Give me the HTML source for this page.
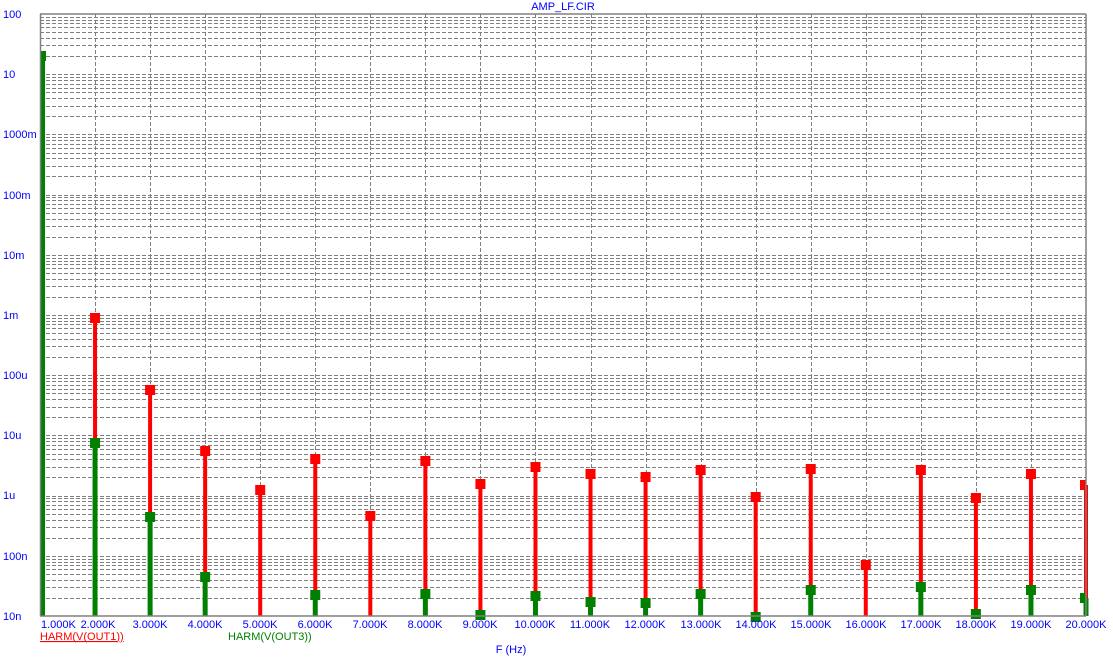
<!DOCTYPE html>
<html><head><meta charset="utf-8"><style>
html,body{margin:0;padding:0;background:#fff;width:1113px;height:661px;overflow:hidden}
svg{display:block}
text{font-family:"Liberation Sans",sans-serif;font-size:11px}
</style></head><body>
<svg id="s" width="1113" height="661" xmlns="http://www.w3.org/2000/svg">
<g id="grid"></g>
<g id="bars"></g>
<line x1="40" y1="14" x2="1086" y2="14" stroke="#808080" stroke-width="1.5"/>
<line x1="40" y1="616" x2="1086" y2="616" stroke="#808080" stroke-width="1.5"/>
<line x1="1086" y1="14" x2="1086" y2="616" stroke="#808080" stroke-width="1.5"/>
<line x1="40.5" y1="14" x2="40.5" y2="616" stroke="#808080" stroke-width="1.5"/>
<text x="563" y="10" fill="#0000ff" text-anchor="middle">AMP_LF.CIR</text>
<g fill="#0000ff">
<text x="3" y="18">100</text><text x="3" y="78">10</text><text x="3" y="138">1000m</text>
<text x="3" y="199">100m</text><text x="3" y="259">10m</text><text x="3" y="319">1m</text>
<text x="3" y="379">100u</text><text x="3" y="439">10u</text><text x="3" y="499">1u</text>
<text x="3" y="560">100n</text><text x="3" y="620">10n</text>
</g>
<g fill="#0000ff" text-anchor="middle">
<text x="41" y="628" text-anchor="start">1.000K</text>
<text x="98" y="628">2.000K</text><text x="150" y="628">3.000K</text><text x="205" y="628">4.000K</text>
<text x="260" y="628">5.000K</text><text x="315" y="628">6.000K</text><text x="370" y="628">7.000K</text>
<text x="425" y="628">8.000K</text><text x="480" y="628">9.000K</text><text x="535" y="628">10.000K</text>
<text x="590" y="628">11.000K</text><text x="645" y="628">12.000K</text><text x="701" y="628">13.000K</text>
<text x="756" y="628">14.000K</text><text x="811" y="628">15.000K</text><text x="866" y="628">16.000K</text>
<text x="921" y="628">17.000K</text><text x="976" y="628">18.000K</text><text x="1031" y="628">19.000K</text>
<text x="1086" y="628">20.000K</text>
</g>
<text x="40" y="640" fill="#ff0000" text-decoration="underline">HARM(V(OUT1))</text>
<line x1="40" y1="641.5" x2="117" y2="641.5" stroke="#ff0000"/>
<text x="228" y="640" fill="#008000">HARM(V(OUT3))</text>
<text x="511" y="653" fill="#0000ff" text-anchor="middle">F (Hz)</text>
</svg>
<script>
var NS="http://www.w3.org/2000/svg",g=document.getElementById('grid'),b=document.getElementById('bars');
function el(p,t,a){var e=document.createElementNS(NS,t);for(var k in a)e.setAttribute(k,a[k]);p.appendChild(e);}
var L=40,R=1086,T=14,B=616,D=60.2,dx=(R-L)/19;
for(var d=0;d<10;d++){for(var m=1;m<=9;m++){var y=B-D*d-Math.log10(m)*D;if(d==0&&m==1)continue;y=Math.round(y)+.5;
el(g,'line',{x1:L,x2:R,y1:y,y2:y,stroke:'#808080','stroke-width':1,'stroke-dasharray':'4,2'});}}
for(var i=1;i<19;i++){var x=Math.round(L+dx*i)+.5;el(g,'line',{x1:x,x2:x,y1:T,y2:B,stroke:'#808080','stroke-width':1,'stroke-dasharray':'4,2'});}
var red=[null,318,390,451,490,459,516,461,484,467,474,477,470,497,469,565,470,498,474,485];
var grn=[56,443,517,577,null,595,null,594,615,596,602,603,594,617,590,null,587,614,590,598];
for(var i=0;i<20;i++){var x=L+dx*i;
if(red[i]!=null){el(b,'rect',{x:x-2,y:red[i],width:4,height:B-red[i],fill:'#ff0000'});
var mx=Math.min(x-5,R-5);el(b,'rect',{x:i==19?R-6:x-5,y:red[i]-5,width:i==19?6:10,height:10,fill:'#ff0000'});}
if(grn[i]!=null){var bx=i==0?L:x-2.5;el(b,'rect',{x:bx,y:grn[i],width:5,height:B-grn[i],fill:'#008000'});
var w=i==0?6:(i==19?6:10),mx2=i==0?L:(i==19?R-6:x-5);el(b,'rect',{x:mx2,y:grn[i]-5,width:w,height:10,fill:'#008000'});}}
</script>
</body></html>
